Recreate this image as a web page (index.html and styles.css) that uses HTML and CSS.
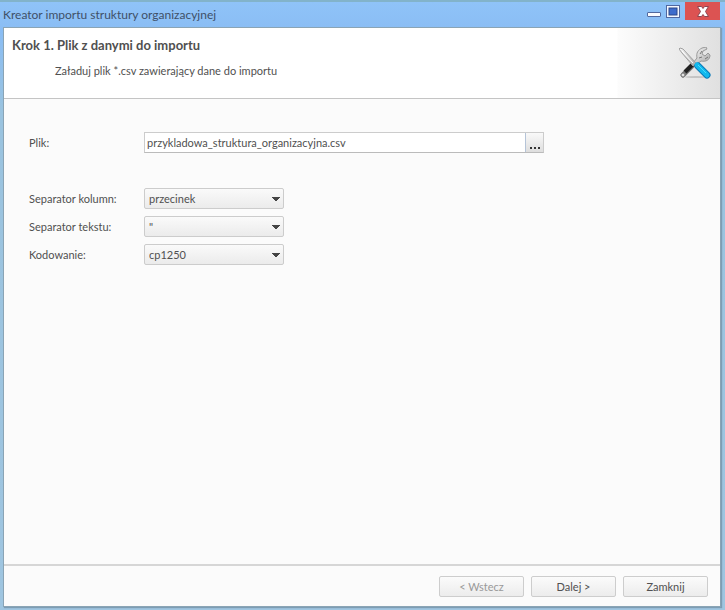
FILE: index.html
```html
<!DOCTYPE html>
<html lang="pl">
    <head>
        <meta charset="UTF-8">
        <meta name="viewport" content="width=device-width, initial-scale=1.0">
        <title>Kreator importu struktury organizacyjnej</title>
        <link rel="stylesheet" href="styles.css">
    </head>
    <body>
        <div class="window">
            <div class="titlebar">
                <span class="title">Kreator importu struktury organizacyjnej</span>
                <div class="window-buttons">
                    <button type="button" class="win-btn" aria-label="Minimalizuj">
                        <svg width="14" height="18" viewBox="0 0 14 18">
                            <rect x="0.5" y="11.5" width="13" height="4" rx="0.5" fill="#fafcff" stroke="#52699e"/>
                        </svg>
                    </button>
                    <button type="button" class="win-btn" aria-label="Maksymalizuj">
                        <svg width="14" height="18" viewBox="0 0 14 18">
                            <rect x="0.5" y="4.5" width="13" height="12" fill="#f4f8ff" stroke="#5168a0"/>
                            <rect x="3" y="7" width="8" height="7" fill="#3d6ccc" stroke="#2c4788"/>
                        </svg>
                    </button>
                    <button type="button" class="win-btn close" aria-label="Zamknij okno">
                        <svg width="14" height="18" viewBox="0 0 14 18">
                            <path d="M1.500 5.500h4l1.500 2 1.500-2h4l-3 5 3 5h-4l-1.500-2-1.500 2h-4l3-5z" fill="#fff" stroke="#8f4550"/>
                        </svg>
                    </button>
                </div>
            </div>
            <form class="panel">
                <header class="header">
                    <div>
                        <h1>Krok 1. Plik z danymi do importu</h1>
                        <p>Załaduj plik *.csv zawierający dane do importu</p>
                    </div>
                    <svg class="tools" width="32" height="32" viewBox="0 0 32 32">
                        <defs>
                            <linearGradient id="metal" x1="0" y1="0" x2="1" y2="1">
                                <stop offset="0" stop-color="#fafafa"/>
                                <stop offset="1" stop-color="#a5a5a5"/>
                            </linearGradient>
                        </defs>
                        <ellipse cx="17" cy="30" rx="11" ry="1" fill="#c4c4c4"/>
                        <path d="M4 28L15 17" stroke="#777" stroke-width="5" stroke-linecap="round"/>
                        <path d="M6 25L15 16" stroke="#222" stroke-width="4"/>
                        <circle cx="4" cy="28" r="2" fill="#e2e2e2" stroke="#777"/>
                        <path d="M14 16l4-5c-1-5 1-8 5-10l4-1 1 2-4 2-1 3 3 2 3-3 2 2c0 5-4 7-9 6l-5 4z" fill="url(#metal)" stroke="#999"/>
                        <path d="M20 11l3-1m0-6l-2 3m8 3l-3 2" stroke="#777" fill="none"/>
                        <path d="M1 1l3 1 13 14-3 3L3 6 0 2z" fill="url(#metal)" stroke="#a0a0a0"/>
                        <path d="M3 4l11 12" stroke="#fff"/>
                        <path d="M19 19l9 9" stroke="#0878b8" stroke-width="7" stroke-linecap="round"/>
                        <path d="M18 18l10 10" stroke="#12b9ee" stroke-width="5" stroke-linecap="round"/>
                        <path d="M19 18l8 8" stroke="#48dcfb"/>
                    </svg>
                </header>
                <main class="content">
                    <div class="row file-row">
                        <label for="plik">Plik:</label>
                        <div class="file">
                            <input type="text" id="plik" value="przykladowa_struktura_organizacyjna.csv">
                            <button type="button" class="browse" aria-label="Wybierz plik">
                                <svg width="12" height="4" viewBox="0 0 12 4">
                                    <path d="M1 1h2v2H1zM5 1h2v2H5zM9 1h2v2H9z" fill="#333"/>
                                </svg>
                            </button>
                        </div>
                    </div>
                    <div class="row">
                        <label for="kolumny">Separator kolumn:</label>
                        <select id="kolumny">
                            <option>przecinek</option>
                        </select>
                    </div>
                    <div class="row">
                        <label for="tekst">Separator tekstu:</label>
                        <select id="tekst">
                            <option>"</option>
                        </select>
                    </div>
                    <div class="row">
                        <label for="kodowanie">Kodowanie:</label>
                        <select id="kodowanie">
                            <option>cp1250</option>
                        </select>
                    </div>
                </main>
                <footer class="footer">
                    <button type="button" class="btn" disabled>&lt; Wstecz</button>
                    <button type="button" class="btn">Dalej &gt;</button>
                    <button type="button" class="btn">Zamknij</button>
                </footer>
            </form>
        </div>
    </body>
</html>
```

FILE: styles.css
```css
* {
    box-sizing: border-box;
}
body {
    margin: 0;
    font-family: Lato, "Open Sans", sans-serif;
    font-size: 11px;
    line-height: 16px;
    color: #505050;
}
button, input, select {
    font: inherit;
    color: inherit;
    margin: 0;
}
.window {
    display: flex;
    flex-direction: column;
    min-height: 100vh;
    padding: 0 4px 3px 3px;
    border-top: 2px solid #82b3ca;
    background: linear-gradient(#8fc3f8, #8abdf4 28px, #9ac3df 110px, #9fc5e0);
}
.titlebar {
    display: flex;
    justify-content: space-between;
    height: 25px;
}
.title {
    padding-top: 5px;
    font-size: 12px;
    color: #3f5068;
}
.window-buttons {
    display: flex;
    align-items: flex-start;
    gap: 5px;
    padding-right: 1px;
}
.win-btn {
    display: flex;
    justify-content: center;
    height: 18px;
    padding: 0;
    border: none;
    background: none;
}
.win-btn svg {
    margin-top: -1px;
}
.close {
    width: 35px;
    background: #dc5352;
}
.panel {
    display: flex;
    flex: 1;
    flex-direction: column;
    border: 1px solid #8aa4b5;
    box-shadow: 1px 1px 1px #7d9db4;
    background: #fbfbfb;
}
.header {
    display: flex;
    justify-content: space-between;
    align-items: flex-start;
    height: 71px;
    padding: 9px 9px 0 8px;
    border-bottom: 1px solid #c4c4c4;
    background: linear-gradient(to right, #fff calc(100% - 103px), #fcfcfc calc(100% - 102px), #e0e0e0);
}
.header h1 {
    margin: 0;
    font-size: 13px;
    line-height: 16px;
}
.header p {
    margin: 10px 0 0 43px;
}
.tools {
    margin-top: 10px;
}
.content {
    flex: 1;
    padding: 33px 25px;
}
.row {
    display: flex;
    align-items: center;
    height: 21px;
    margin-bottom: 7px;
}
.row label {
    width: 115px;
}
.file-row {
    margin-bottom: 35px;
}
.file {
    display: flex;
    width: 400px;
    height: 21px;
    border: 1px solid #ccc;
    border-bottom-color: #bbb;
}
.file input {
    flex: 1;
    min-width: 0;
    padding: 0 2px;
    border: none;
    background: #fff;
}
.browse {
    display: flex;
    align-items: flex-end;
    justify-content: center;
    width: 18px;
    padding: 0 0 2px;
    border: none;
    border-left: 1px solid #b5c4d8;
    background: linear-gradient(#f9f9f9, #dedede);
}
select {
    width: 140px;
    height: 21px;
    padding: 0 4px;
    border: 1px solid #ccc;
    border-radius: 2px;
    appearance: none;
    background:
        linear-gradient(to bottom left, #444 50%, transparent 52%) right 7px center / 4px 4px no-repeat,
        linear-gradient(to bottom right, #444 50%, transparent 52%) right 3px center / 4px 4px no-repeat,
        linear-gradient(#fafafa, #ebebeb);
}
.footer {
    display: flex;
    justify-content: flex-end;
    gap: 7px;
    padding: 10px 12px 9px;
    border-top: 2px solid #d6d6d6;
}
.btn {
    width: 85px;
    height: 21px;
    padding: 0;
    border: 1px solid #cdcdcd;
    border-radius: 2px;
    background: linear-gradient(#fbfbfb, #ececec);
}
.btn:disabled {
    color: #999;
}
```
